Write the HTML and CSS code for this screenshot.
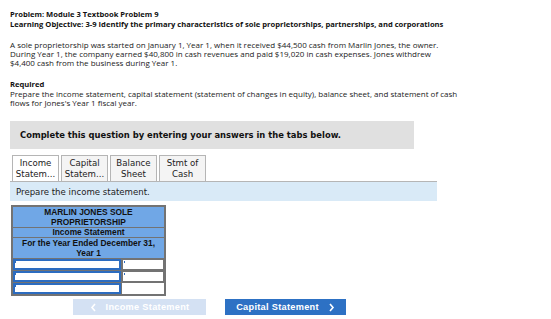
FILE: index.html
```html
<!DOCTYPE html>
<html lang="en">
<head>
    <meta charset="UTF-8">
    <title>Module 3 Textbook Problem 9</title>
    <link rel="stylesheet" href="styles.css">
</head>
<body>
    <div class="problem">
        <p class="heading">
            Problem: Module 3 Textbook Problem 9<br>
            Learning Objective: 3-9 Identify the primary characteristics of sole proprietorships, partnerships, and corporations
        </p>

        <p class="text">A sole proprietorship was started on January 1, Year 1, when it received $44,500 cash from Marlin Jones, the owner. During Year 1, the company earned $40,800 in cash revenues and paid $19,020 in cash expenses. Jones withdrew $4,400 cash from the business during Year 1.</p>

        <div class="text required">
            <p class="required-title">Required</p>
            <p>Prepare the income statement, capital statement (statement of changes in equity), balance sheet, and statement of cash flows for Jones's Year 1 fiscal year.</p>
        </div>

        <div class="notice">Complete this question by entering your answers in the tabs below.</div>

        <div class="tabs">
            <button class="tab active">Income<br>Statem...</button>
            <button class="tab">Capital<br>Statem...</button>
            <button class="tab">Balance<br>Sheet</button>
            <button class="tab">Stmt of<br>Cash</button>
        </div>
        <div class="tab-info">Prepare the income statement.</div>

        <table class="statement">
            <tr><th colspan="2" class="two-line">MARLIN JONES SOLE<br>PROPRIETORSHIP</th></tr>
            <tr><th colspan="2">Income Statement</th></tr>
            <tr><th colspan="2" class="two-line">For the Year Ended December 31,<br>Year 1</th></tr>
            <tr>
                <td class="label"><input type="text"></td>
                <td class="amount"><input type="text"></td>
            </tr>
            <tr>
                <td class="label"><input type="text"></td>
                <td class="amount"><input type="text"></td>
            </tr>
            <tr>
                <td class="label"><input type="text"></td>
                <td class="amount total"></td>
            </tr>
        </table>

        <div class="nav">
            <button class="nav-btn prev" disabled>
                <svg width="7" height="9" viewBox="0 0 7 9"><polyline points="5,1 2,4.5 5,8" fill="none" stroke="currentColor" stroke-width="1.6"/></svg>
                Income Statement
            </button>
            <button class="nav-btn next">
                Capital Statement
                <svg width="7" height="9" viewBox="0 0 7 9"><polyline points="2,1 5,4.5 2,8" fill="none" stroke="currentColor" stroke-width="1.6"/></svg>
            </button>
        </div>
    </div>
</body>
</html>
```

FILE: styles.css
```css
* {
    margin: 0;
    padding: 0;
    box-sizing: border-box;
}

body {
    font-family: "Open Sans", Lato, sans-serif;
    color: #222;
    background: #fff;
}

.problem {
    padding: 10px 10px 0 10px;
}

.heading {
    font-size: 7.6px;
    line-height: 9.5px;
    font-weight: bold;
    color: #111;
}

.text {
    width: 445px;
    font-size: 8px;
    line-height: 9.2px;
    margin-top: 11px;
}

.required {
    width: 462px;
    margin-top: 12px;
}

.required-title {
    font-size: 7.6px;
    font-weight: bold;
    color: #111;
}

.notice {
    width: 404px;
    height: 28px;
    margin-top: 14px;
    padding-left: 10px;
    display: flex;
    align-items: center;
    background: #e0e0e0;
    font-family: "DejaVu Sans", Verdana, sans-serif;
    font-size: 8.4px;
    font-weight: bold;
    color: #111;
}

.tabs {
    display: flex;
    gap: 2px;
    margin-top: 6px;
    padding-left: 2px;
}

.tab {
    width: 47px;
    height: 26px;
    background: #f4f4f4;
    border: 1px solid #b5b5b5;
    border-bottom: none;
    font-family: "DejaVu Sans", Verdana, sans-serif;
    font-size: 8.6px;
    line-height: 11px;
    color: #222;
}

.tab.active {
    background: #fff;
}

.tab-info {
    width: 427px;
    height: 20px;
    padding-left: 6px;
    display: flex;
    align-items: center;
    background: #d9eaf7;
    border-top: 1px solid #b5b5b5;
    font-family: "DejaVu Sans", Verdana, sans-serif;
    font-size: 8.6px;
    color: #222;
}

.statement {
    margin: 4px 0 0 1px;
    width: 155px;
    border-collapse: collapse;
    border: 2px solid #737373;
}

.statement th {
    height: 9px;
    background: #70a7e6;
    border: 1px solid #737373;
    font-family: "Liberation Sans", Arial, sans-serif;
    font-size: 8.4px;
    line-height: 9px;
    font-weight: bold;
    color: #111;
    padding: 0;
}

.statement th.two-line {
    height: 20px;
    line-height: 10px;
}

.statement td {
    position: relative;
    height: 12px;
    padding: 0;
    background: #fff;
    border: 1px solid #737373;
}

.statement td.label {
    width: 109px;
}

.statement td.label::before,
.statement td.amount:not(.total)::before {
    content: "";
    position: absolute;
    left: 2px;
    top: 2px;
    width: 1px;
    height: 2px;
    background: #2c6cc0;
}

.statement input {
    display: block;
    width: 100%;
    height: 11px;
    border: 2px solid #2c6cc0;
    background: #fff;
    font-size: 8px;
    line-height: 7px;
}

.statement td.amount input {
    border: 1px solid #737373;
}

.statement td.total {
    border-top: 1px solid #000;
    border-bottom: 1px solid #000;
}

.nav {
    display: flex;
    gap: 19px;
    margin: 3px 0 0 63px;
}

.nav-btn {
    height: 16px;
    border: none;
    display: flex;
    align-items: center;
    justify-content: center;
    gap: 9px;
    font-family: "Liberation Sans", Arial, sans-serif;
    font-size: 9.2px;
    letter-spacing: 0.3px;
    font-weight: bold;
    color: #fff;
}

.nav-btn.prev {
    width: 133px;
    background: #d4e1f3;
}

.nav-btn.next {
    width: 121px;
    background: #2d71c4;
}
```
